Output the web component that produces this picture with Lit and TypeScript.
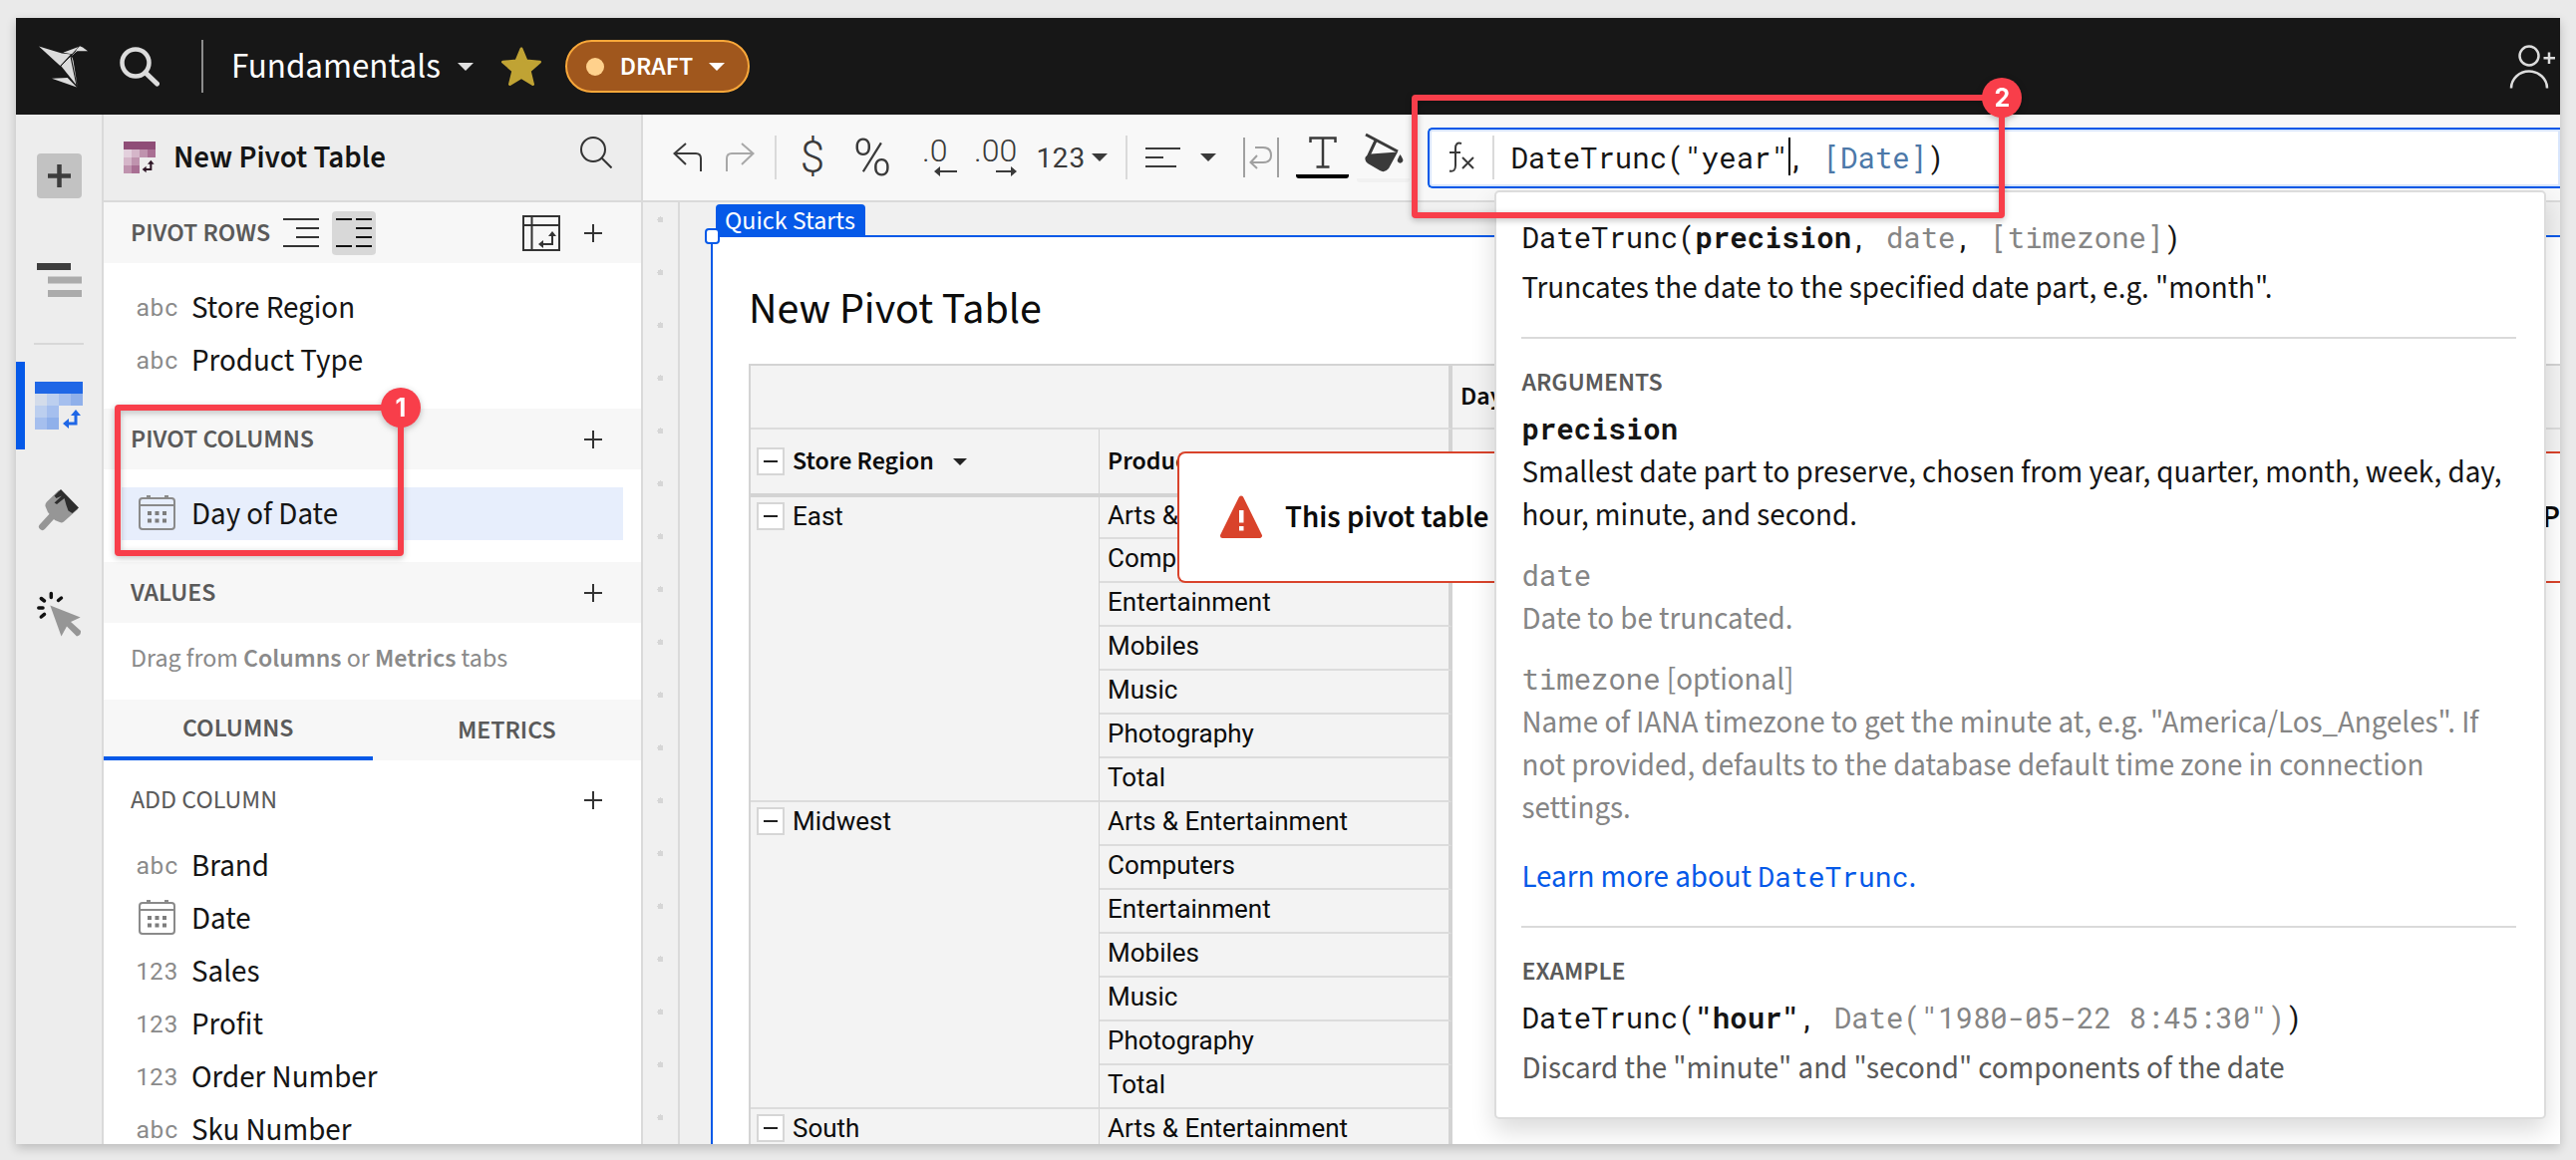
import { LitElement, html, svg, css, nothing } from "lit";
import { customElement, property, state } from "lit/decorators.js";
import { classMap } from "lit/directives/class-map.js";

type FieldType = "text" | "date" | "number";
interface Field {
  name: string;
  type: FieldType;
}

const PIVOT_ROWS: Field[] = [
  { name: "Store Region", type: "text" },
  { name: "Product Type", type: "text" },
];

const PIVOT_COLUMNS: Field[] = [{ name: "Day of Date", type: "date" }];

const SOURCE_COLUMNS: Field[] = [
  { name: "Brand", type: "text" },
  { name: "Date", type: "date" },
  { name: "Sales", type: "number" },
  { name: "Profit", type: "number" },
  { name: "Order Number", type: "number" },
  { name: "Sku Number", type: "text" },
];

const REGIONS = ["East", "Midwest", "South"];
const PRODUCT_TYPES = [
  "Arts & Entertainment",
  "Computers",
  "Entertainment",
  "Mobiles",
  "Music",
  "Photography",
  "Total",
];

const sans = css`"Source Sans Pro", "Source Sans 3", "Noto Sans CJK JP", sans-serif`;
const mono = css`"Roboto Mono", "DejaVu Sans Mono", monospace`;

const caret = html`<svg class="caret" width="16" height="8" viewBox="0 0 16 8" aria-hidden="true"><path d="M0 0H16L8 8Z" fill="currentColor" /></svg>`;

const plusThin = html`<svg width="18" height="18" viewBox="0 0 18 18" aria-hidden="true"><path d="M9 0V18M0 9H18" stroke="#333" stroke-width="2" /></svg>`;

const calendar = html`<svg width="38" height="36" viewBox="0 0 38 36" fill="none" aria-hidden="true">
  <rect x="1" y="3" width="35" height="31" rx="3" stroke="#8a8a8a" stroke-width="2" />
  <path d="M1 10H36" stroke="#8a8a8a" stroke-width="2" />
  <path d="M8 0h4v3h-4zM26 0h4v3h-4z" fill="#8a8a8a" />
  <path d="M9 16h4v4h-4zM16.500 16h4v4h-4zM24 16h4v4h-4zM9 23.500h4v4h-4zM16.500 23.500h4v4h-4zM24 23.500h4v4h-4z" fill="#7d7d7d" />
</svg>`;

const pivotIcon = (size: number, tones: string[], arrow: string) => html`<svg
  width=${size} height=${size} viewBox="0 0 48 48" aria-hidden="true">
  <path d="M0 0H48V12H0Z" fill=${tones[0]} />
  <path d="M0 12H12V24H0Z" fill=${tones[1]} />
  <path d="M12 12H24V24H12ZM0 24H12V36H0Z" fill=${tones[2]} />
  <path d="M24 12H36V24H24ZM12 24H24V36H12ZM0 36H12V48H0Z" fill=${tones[3]} />
  <path d="M36 12H48V24H36ZM12 36H24V48H12Z" fill=${tones[4]} />
  <path d="M41 33V42H33" fill="none" stroke=${arrow} stroke-width="3" />
  <path d="M36 34L41 28L46 34ZM34 37L28 42L34 47Z" fill=${arrow} />
</svg>`;

@customElement("field-row")
class FieldRow extends LitElement {
  @property() name = "";
  @property() type: FieldType = "text";
  @property({ type: Boolean, reflect: true }) selected = false;

  static styles = css`
    :host {
      display: block;
      padding: 0 18px;
    }
    .row {
      display: flex;
      align-items: center;
      gap: 13px;
      width: 100%;
      height: 53px;
      padding: 0 14px;
      border: 0;
      background: none;
      text-align: left;
      font: 31px/40px ${sans};
      color: #151515;
    }
    :host([selected]) .row {
      background: #e7eefc;
    }
    .kind {
      display: flex;
      justify-content: center;
      flex: none;
      width: 43px;
      padding-bottom: 2px;
      font: 24px/32px ${mono};
      color: #8a8a8a;
    }
  `;

  render() {
    const mark = this.type === "date" ? calendar : this.type === "number" ? "123" : "abc";
    return html`<button class="row"><span class="kind">${mark}</span><span>${this.name}</span></button>`;
  }
}

@customElement("function-help")
class FunctionHelp extends LitElement {
  static styles = css`
    :host {
      display: block;
      box-sizing: border-box;
      padding: 25px 28px 27px 25px;
      border: 2px solid #dcdcdc;
      border-radius: 5px;
      background: #fff;
      box-shadow: 0 12px 24px rgba(0, 0, 0, 0.14);
      font: 31px/43px ${sans};
      color: #151515;
    }
    p,
    h3 {
      margin: 0;
    }
    .code {
      margin-bottom: 3px;
      font: 29px/40px ${mono};
    }
    span.code {
      font-size: 28px;
      line-height: 1;
    }
    .prose {
      font-family: ${sans};
      font-size: 31px;
      line-height: 1;
    }
    .soft {
      color: #858585;
    }
    .mid {
      color: #5a5a5a;
    }
    .lead {
      margin-top: 10px;
    }
    .block {
      margin-top: 18px;
    }
    hr {
      height: 2px;
      margin: 27px 0 28px;
      border: 0;
      background: #dadada;
    }
    h3 {
      margin-bottom: 10px;
      font: 600 26px/32px ${sans};
      color: #5a5a5a;
    }
    a {
      display: block;
      margin-top: 26px;
      color: #0559e8;
      text-decoration: none;
    }
  `;

  render() {
    return html`
      <p class="code">DateTrunc(<b>precision</b>, <span class="soft">date</span>, <span class="soft">[timezone]</span>)</p>
      <p class="lead">Truncates the date to the specified date part, e.g. "month".</p>
      <hr />
      <h3>ARGUMENTS</h3>
      <p class="code"><b>precision</b></p>
      <p>Smallest date part to preserve, chosen from year, quarter, month, week, day, hour, minute, and second.</p>
      <div class="soft block">
        <p class="code">date</p>
        <p>Date to be truncated.</p>
      </div>
      <div class="soft block">
        <p class="code">timezone<span class="prose"> [optional]</span></p>
        <p>Name of IANA timezone to get the minute at, e.g. "America/Los_Angeles". If not provided, defaults to the database default time zone in connection settings.</p>
      </div>
      <a href="#datetrunc">Learn more about <span class="code">DateTrunc</span>.</a>
      <hr />
      <h3>EXAMPLE</h3>
      <p class="code">DateTrunc(<b>"hour"</b>, <span class="soft">Date("1980-05-22 8:45:30")</span>)</p>
      <p class="mid lead">Discard the "minute" and "second" components of the date</p>
    `;
  }
}

@customElement("pivot-table")
class PivotTable extends LitElement {
  static styles = css`
    :host {
      display: block;
    }
    table {
      width: 100%;
      table-layout: fixed;
      border-collapse: separate;
      border-spacing: 0;
      border-left: 2px solid #d3d3d3;
      font: 26px/32px Roboto, sans-serif;
      color: #0c0c0c;
    }
    .c-region {
      width: 350px;
    }
    .c-type {
      width: 354px;
    }
    th,
    td {
      box-sizing: border-box;
      height: 44px;
      padding: 0 8px 4px;
      text-align: left;
      font-weight: 400;
    }
    thead th {
      padding: 0 8px;
      background: #f3f3f3;
      font: 600 26px/32px ${sans};
    }
    .top th {
      height: 66px;
      border-top: 2px solid #d3d3d3;
      border-bottom: 2px solid #dcdcdc;
    }
    .names th {
      height: 68px;
      border-bottom: 4px solid #d3d3d3;
    }
    .names .region,
    .region {
      padding-left: 6px;
      border-right: 1px solid #d3d3d3;
    }
    tbody .region {
      padding: 3px 6px 0;
      border-bottom: 2px solid #dcdcdc;
      background: #f3f3f3;
      vertical-align: top;
    }
    thead .type,
    .type {
      border-right: 4px solid #d3d3d3;
    }
    tbody .type {
      border-bottom: 2px solid #dcdcdc;
      background: #f3f3f3;
    }
    tbody:first-of-type tr:first-child td {
      height: 42px;
    }
    .label {
      display: flex;
      align-items: center;
      gap: 8px;
    }
    .fold {
      display: grid;
      place-items: center;
      box-sizing: border-box;
      flex: none;
      width: 28px;
      height: 28px;
      padding: 0;
      border: 2px solid #d6d6d6;
      background: #fff;
    }
    .sort {
      display: flex;
      margin-left: 11px;
      padding: 0;
      border: 0;
      background: none;
      color: #222;
    }
    .sort .caret {
      width: 14px;
      height: 7px;
    }
  `;

  private fold(label: string) {
    return html`<button class="fold" aria-label=${`Collapse ${label}`}>
      <svg width="14" height="2" viewBox="0 0 14 2"><path d="M0 1H14" stroke="#222" stroke-width="2" /></svg>
    </button>`;
  }

  render() {
    return html`<table>
      <colgroup><col class="c-region" /><col class="c-type" /><col /></colgroup>
      <thead>
        <tr class="top"><th class="type" colspan="2"></th><th>Day of Date</th></tr>
        <tr class="names">
          <th class="region"><div class="label">${this.fold("all regions")}<span>Store Region</span><button class="sort" aria-label="Sort">${caret}</button></div></th>
          <th class="type">Product Type</th>
          <th></th>
        </tr>
      </thead>
      ${REGIONS.map(
        (region) => html`<tbody>
          ${PRODUCT_TYPES.map(
            (type, i) => html`<tr>
              ${i === 0
                ? html`<th class="region" rowspan=${PRODUCT_TYPES.length}><div class="label">${this.fold(region)}<span>${region}</span></div></th>`
                : nothing}
              <td class="type">${type}</td><td></td>
            </tr>`,
          )}
        </tbody>`,
      )}
    </table>`;
  }
}

@customElement("app-root")
class AppRoot extends LitElement {
  @state() private tab: "columns" | "metrics" = "columns";

  static styles = css`
    :host {
      display: block;
      box-sizing: border-box;
      height: 100vh;
      padding: 18px 16px 16px;
      background: #eaeaea;
      font: 31px/40px ${sans};
      color: #151515;
    }
    button {
      padding: 0;
      border: 0;
      background: none;
      font: inherit;
      color: inherit;
    }
    .frame {
      display: flex;
      flex-direction: column;
      height: 100%;
      overflow: hidden;
      background: #fff;
    }
    .shadow {
      height: 100%;
      box-shadow: 0 4px 10px rgba(0, 0, 0, 0.2);
    }

    /* top bar */
    .topbar {
      display: flex;
      align-items: center;
      flex: none;
      box-sizing: border-box;
      height: 97px;
      padding: 0 4px 0 23px;
      background: #171717;
      color: #fff;
    }
    .topbar button {
      display: flex;
      align-items: center;
    }
    .find {
      margin-left: 31px;
    }
    .rule {
      width: 2px;
      height: 53px;
      margin: 0 28px 0 42px;
      background: #8c8c8c;
    }
    .doc {
      gap: 17px;
      font-size: 35px;
      line-height: 48px;
    }
    .doc .caret {
      color: #e0e0e0;
    }
    .star {
      margin: 0 24px 0 28px;
    }
    .topbar .draft {
      box-sizing: border-box;
      gap: 16px;
      height: 53px;
      padding: 0 23px 0 19px;
      border: 2px solid #f9a83a;
      border-radius: 27px;
      background: #a0571d;
      font-weight: 600;
      font-size: 26px;
      line-height: 32px;
    }
    .dot {
      width: 18px;
      height: 18px;
      border-radius: 50%;
      background: #ffd18c;
    }
    .share {
      margin-left: auto;
    }

    /* body */
    .body {
      display: flex;
      flex: 1;
      min-height: 0;
    }
    .rail {
      display: flex;
      flex-direction: column;
      align-items: center;
      flex: none;
      width: 86px;
      border-right: 2px solid #dadada;
      background: #ededed;
    }
    .rail button {
      display: grid;
      place-items: center;
      width: 86px;
      height: 88px;
    }
    .rail .add {
      width: 45px;
      height: 45px;
      margin: 39px 0 38px;
      border-radius: 4px;
      background: #c2c2c2;
    }
    .rail .line {
      width: 50px;
      height: 2px;
      margin: 19px 0 17px;
      background: #d8d8d8;
    }
    .rail .current {
      box-sizing: border-box;
      padding-right: 9px;
      border-left: 9px solid #0559e8;
    }
    .rail .spaced {
      margin-top: 17px;
    }

    /* side panel */
    .panel {
      flex: none;
      width: 539px;
      border-right: 2px solid #dadada;
      background: #fff;
    }
    .panel-head {
      display: flex;
      align-items: center;
      box-sizing: border-box;
      height: 88px;
      padding: 0 29px 0 20px;
      border-bottom: 2px solid #dadada;
      background: #ededed;
    }
    .panel-head h1 {
      flex: 1;
      margin: 0 0 0 18px;
      font-size: 31px;
      font-weight: 600;
      line-height: 40px;
    }
    .section {
      position: relative;
    }
    .section-head {
      display: flex;
      align-items: center;
      box-sizing: border-box;
      height: 61px;
      padding: 0 39px 0 27px;
      background: #f7f7f7;
      font-size: 26px;
      line-height: 32px;
      color: #5a5a5a;
    }
    .section-head h2 {
      margin: 0;
      font: inherit;
      font-weight: 600;
    }
    .section-head.plain {
      height: 79px;
      background: #fff;
    }
    .section-head.plain h2 {
      font-weight: 400;
    }
    .plain + .fields {
      padding-top: 0;
    }
    .section-head button {
      display: flex;
    }
    .section-head .last {
      margin-left: auto;
    }
    .layout {
      margin-left: 13px;
    }
    .section-head .layout.on {
      align-items: center;
      justify-content: center;
      width: 44px;
      height: 44px;
      border-radius: 4px;
      background: #d8d8d8;
    }
    .swap {
      margin-left: auto;
      margin-right: 24px;
    }
    .fields {
      padding: 18px 0 22px;
    }
    .hint {
      margin: 0;
      padding: 16px 27px 21px;
      font-size: 26px;
      line-height: 40px;
      color: #8a8a8a;
    }
    .hint b {
      font-weight: 600;
    }
    .tabs {
      display: flex;
      height: 61px;
      background: #f7f7f7;
    }
    .tabs button {
      flex: 1;
      box-sizing: border-box;
      font-size: 26px;
      font-weight: 600;
      line-height: 32px;
      color: #5a5a5a;
    }
    .tabs .active {
      border-bottom: 4px solid #0559e8;
    }

    /* main */
    .main {
      display: flex;
      flex-direction: column;
      flex: 1;
      min-width: 0;
    }
    .toolbar {
      display: flex;
      align-items: center;
      flex: none;
      box-sizing: border-box;
      height: 88px;
      padding-left: 18px;
      border-bottom: 2px solid #dadada;
      background: #f8f8f8;
      color: #3a3a3a;
    }
    .toolbar button {
      display: flex;
      align-items: center;
      justify-content: center;
      flex: none;
      height: 53px;
    }
    .history {
      width: 53px;
    }
    .sep {
      flex: none;
      width: 2px;
      height: 44px;
      margin: 0 6px 0 8px;
      background: #dadada;
    }
    .fmt {
      width: 60px;
      font-family: Roboto, sans-serif;
      font-weight: 300;
      font-size: 44px;
      line-height: 53px;
    }
    .fmt.pct {
      font-size: 52px;
    }
    .digits {
      font-family: Roboto, sans-serif;
      font-weight: 300;
      font-size: 32px;
    }
    .toolbar .decimals {
      justify-content: flex-end;
      width: 58px;
    }
    .toolbar .number {
      gap: 6px;
      margin-left: 18px;
      font: 28px/40px ${mono};
    }
    .sep.wide {
      margin: 0 18px;
    }
    .align {
      gap: 20px;
    }
    .wrap {
      margin: 0 17px 0 27px;
    }
    .toolbar .ink {
      flex-direction: column;
      gap: 6px;
      width: 53px;
      margin-right: 8px;
    }
    .ink i {
      width: 100%;
      height: 4px;
      border-radius: 0 0 3px 3px;
      background: #000;
    }
    .ink i.none {
      background: #f1f1f1;
    }
    .formula {
      position: relative;
      display: flex;
      align-items: center;
      flex: 1;
      box-sizing: border-box;
      min-width: 0;
      height: 61px;
      margin-left: 10px;
      border: 2px solid #0559e8;
      border-right: 0;
      border-radius: 5px 0 0 5px;
      background: #fff;
      box-shadow: inset 0 0 0 2px #d9e6fc;
    }
    .fx {
      flex: none;
      margin: 0 17px 0 19px;
    }
    .formula .sep {
      margin: 0;
    }
    .editor {
      position: relative;
      flex: 1;
      margin-left: 16px;
      font: 29px/38px ${mono};
      color: #151515;
    }
    .tokens {
      white-space: pre;
    }
    .ref {
      color: #4c78a8;
    }
    .cursor {
      position: relative;
    }
    .cursor::after {
      content: "";
      position: absolute;
      top: -1px;
      left: 0;
      width: 2px;
      height: 38px;
      background: #000;
    }
    .editor input {
      position: absolute;
      inset: 0;
      box-sizing: border-box;
      width: 100%;
      padding: 0;
      border: 0;
      outline: 0;
      background: none;
      font: inherit;
      color: transparent;
    }
    function-help {
      position: absolute;
      z-index: 4;
      top: 61px;
      left: 65px;
      right: 14px;
    }

    /* numbered marks */
    .mark {
      position: absolute;
      z-index: 6;
      box-sizing: border-box;
      border: 6px solid #f83e4a;
      border-radius: 4px;
      filter: drop-shadow(0 2px 3px rgba(0, 0, 0, 0.25));
      pointer-events: none;
    }
    .mark span {
      position: absolute;
      top: -23px;
      right: -23px;
      width: 40px;
      height: 40px;
      border-radius: 50%;
      background: #f83e4a;
      color: #fff;
      text-align: center;
      font: 700 25px/40px Inter, sans-serif;
    }
    .mark.one {
      top: -4px;
      left: 11px;
      width: 290px;
      height: 152px;
    }
    .mark.two {
      top: -35px;
      left: -18px;
      width: 595px;
      height: 124px;
    }

    /* canvas */
    .canvas {
      display: flex;
      flex: 1;
      min-height: 0;
      background: #f0f0f0;
    }
    .gutter {
      flex: none;
      width: 35px;
      border-right: 2px solid #dadada;
      background-image: radial-gradient(circle, #d6d6d6 3px, transparent 3px);
      background-size: 35px 53px;
      background-position: 0 -9px;
    }
    .page {
      position: relative;
      flex: 1;
      box-sizing: border-box;
      min-width: 0;
      margin: 33px 0 0 31px;
      padding: 49px 0 0 36px;
      border-top: 2px solid #0559e8;
      border-left: 2px solid #0559e8;
      background: #fff;
    }
    .tag {
      position: absolute;
      left: 3px;
      bottom: 100%;
      box-sizing: border-box;
      height: 33px;
      padding: 0 10px 0 9px;
      border-radius: 4px 4px 0 0;
      background: #0559e8;
      color: #fff;
      font-size: 26px;
      line-height: 34px;
    }
    .handle {
      position: absolute;
      top: -9px;
      left: -8px;
      box-sizing: border-box;
      width: 15px;
      height: 16px;
      border: 2px solid #0559e8;
      border-radius: 4px;
      background: #fff;
    }
    .page h2 {
      margin: 0 0 30px;
      font-size: 44px;
      font-weight: 400;
      line-height: 48px;
      color: #0c0c0c;
    }
    .error {
      position: absolute;
      top: 215px;
      left: 466px;
      right: 0;
      display: flex;
      align-items: center;
      gap: 22px;
      box-sizing: border-box;
      height: 132px;
      padding-left: 40px;
      border: 2px solid #d9432b;
      border-right: 0;
      border-radius: 8px 0 0 8px;
      background: #fff;
      font-weight: 600;
      color: #0c0c0c;
    }
    .error .more {
      margin-left: auto;
    }
  `;

  private renderTopbar() {
    return html`<header class="topbar">
      <svg width="50" height="42" viewBox="0 0 50 42" fill="#dcdcdc" aria-hidden="true">
        <path d="M0 .5L23 7.500L32 8.500L21.300 20Z" />
        <path d="M24.300 6.700L39.700 .9L33 8.200Z" />
        <path d="M41 .3L44 1.500L49 5.300L38.500 5.200Q35.500 7 33 10L34 7.500Z" />
        <path d="M31.400 10.800L22.300 20.300L37.300 39Z" />
        <path d="M32.600 10.400Q34 12 34.500 15L38.900 42Z" />
        <path d="M13 32.800L28.700 32L38 41.500Z" />
        <path d="M32.500 9.500L37.500 4.500M21.500 20.500L33 9" stroke="#171717" stroke-width=".9" />
      </svg>
      <button class="find" aria-label="Search">
        <svg width="40" height="40" viewBox="0 0 40 40" fill="none" stroke="#dcdcdc">
          <circle cx="16" cy="16" r="13.500" stroke-width="4.500" />
          <path d="M26 26L37.500 37" stroke-width="5" stroke-linecap="round" />
        </svg>
      </button>
      <span class="rule"></span>
      <button class="doc"><span>Fundamentals</span>${caret}</button>
      <svg class="star" width="40" height="40" viewBox="0 0 40 40" aria-label="Favorite">
        <path d="M20 2L25 14L38.500 15.200L28.200 24L31.500 37.500L20 30.500L8.500 37.500L11.800 24L1.500 15.200L15 14Z" fill="#c0a334" stroke="#c0a334" stroke-width="3" stroke-linejoin="round" />
      </svg>
      <button class="draft"><span class="dot"></span><span>DRAFT</span>${caret}</button>
      <button class="share" aria-label="Share">
        <svg width="48" height="44" viewBox="0 0 48 44" fill="none" stroke="#dcdcdc" stroke-width="2.500">
          <circle cx="21" cy="11" r="9.500" />
          <path d="M3 43.500A18 17 0 0 1 39 43.500" />
          <path d="M41 7.500V19M35.500 13.200H47" />
        </svg>
      </button>
    </header>`;
  }

  private renderRail() {
    return html`<nav class="rail" aria-label="Editor">
      <button class="add" aria-label="Add element">
        <svg width="23" height="23" viewBox="0 0 23 23"><path d="M11.500 0V23M0 11.500H23" stroke="#3d3d3d" stroke-width="4.500" /></svg>
      </button>
      <button aria-label="Outline">
        <svg width="46" height="36" viewBox="0 0 46 36">
          <path d="M1 1h34v7h-34z" fill="#3d3d3d" />
          <path d="M12 14.500h34v7h-34zM12 28h34v7h-34z" fill="#ababab" />
        </svg>
      </button>
      <span class="line"></span>
      <button class="current" aria-label="Element properties">
        ${pivotIcon(48, ["#1f67e6", "#d3dcea", "#bccfef", "#a5bfee", "#8fb0ea"], "#1f67e6")}
      </button>
      <button class="spaced" aria-label="Element format">
        <svg width="42" height="42" viewBox="0 0 42 42">
          <path d="M15 26L4.500 37.500" stroke="#969696" stroke-width="7" stroke-linecap="round" />
          <path d="M21 1L40 20L26 32.500Q24 34 22 33L17 31L10 23L7.500 17Q7 14.500 9 12.500Z" fill="#969696" />
          <path d="M23 0L41 18.500L34.500 24L30.500 21.500L28.500 16L26.500 9L19 15L16.500 13.500L24 6.500L18.500 9L16.500 6.500Z" fill="#2e2e2e" />
        </svg>
      </button>
      <button class="spaced" aria-label="Actions">
        <svg width="45" height="48" viewBox="0 0 45 48">
          <path d="M13.300 14.500L43.700 26.500L34 31L44 40Q44.500 44.500 40 45.500L30 35.500L24.500 45.500Z" fill="#969696" />
          <path d="M14.300 2.500V6.500M4.300 7.500L7.500 10M1.800 17H6M4.300 26L7.500 23.300M21.500 9.500L24.500 7" stroke="#111" stroke-width="3.500" stroke-linecap="round" />
        </svg>
      </button>
    </nav>`;
  }

  private renderFields(fields: Field[], selected = false) {
    return html`<div class="fields">
      ${fields.map((f) => html`<field-row .name=${f.name} .type=${f.type} ?selected=${selected}></field-row>`)}
    </div>`;
  }

  private renderPanel() {
    return html`<aside class="panel">
      <div class="panel-head">
        ${pivotIcon(32, ["#8f4d77", "#e3d0dd", "#d5b6c9", "#bf93ae", "#a96f93"], "#2d1424")}
        <h1>New Pivot Table</h1>
        <button aria-label="Search panel">
          <svg width="32" height="32" viewBox="0 0 32 32" fill="none" stroke="#333" stroke-width="2">
            <circle cx="13" cy="13" r="12" /><path d="M21.500 21.500L31.500 31.500" />
          </svg>
        </button>
      </div>
      <section class="section">
        <div class="section-head">
          <h2>PIVOT ROWS</h2>
          <button class="layout" aria-label="Stacked rows">
            <svg width="36" height="29" viewBox="0 0 36 29"><path d="M0 1H36M13 10H36M13 19H36M0 28H36" stroke="#333" stroke-width="2" /></svg>
          </button>
          <button class="layout on" aria-label="Separate rows">
            <svg width="36" height="29" viewBox="0 0 36 29"><path d="M0 1H16M20 1H36M20 10H36M20 19H36M0 28H16M20 28H36" stroke="#111" stroke-width="2" /></svg>
          </button>
          <button class="swap" aria-label="Swap rows and columns">
            <svg width="38" height="36" viewBox="0 0 38 36" fill="none" stroke="#333" stroke-width="2">
              <path d="M1 1H37V35H1ZM9.500 1V35M1 10H37M30 20V29H19" />
              <path d="M26 21L30 16L34 21ZM21 25L16 29L21 33Z" fill="#333" stroke="none" />
            </svg>
          </button>
          <button aria-label="Add pivot row">${plusThin}</button>
        </div>
        ${this.renderFields(PIVOT_ROWS)}
      </section>
      <section class="section">
        <div class="section-head"><h2>PIVOT COLUMNS</h2><button class="last" aria-label="Add pivot column">${plusThin}</button></div>
        ${this.renderFields(PIVOT_COLUMNS, true)}
        <div class="mark one"><span>1</span></div>
      </section>
      <section class="section">
        <div class="section-head"><h2>VALUES</h2><button class="last" aria-label="Add value">${plusThin}</button></div>
        <p class="hint">Drag from <b>Columns</b> or <b>Metrics</b> tabs</p>
      </section>
      <div class="tabs" role="tablist">
        <button role="tab" class=${classMap({ active: this.tab === "columns" })} @click=${() => (this.tab = "columns")}>COLUMNS</button>
        <button role="tab" class=${classMap({ active: this.tab === "metrics" })} @click=${() => (this.tab = "metrics")}>METRICS</button>
      </div>
      <section class="section">
        <div class="section-head plain"><h2>ADD COLUMN</h2><button class="last" aria-label="Add column">${plusThin}</button></div>
        ${this.renderFields(SOURCE_COLUMNS)}
      </section>
    </aside>`;
  }

  private renderToolbar() {
    const back = svg`<path d="M1 11H23Q28 11 28 16V29M13 1L1.500 11L13 22" fill="none" stroke="currentColor" stroke-width="2" />`;
    return html`<div class="toolbar" role="toolbar" aria-label="Formatting">
      <button class="history" aria-label="Undo"><svg width="29" height="30" viewBox="0 0 29 30">${back}</svg></button>
      <button class="history" aria-label="Redo"><svg width="29" height="30" viewBox="0 0 29 30" color="#a8a8a8"><g transform="matrix(-1 0 0 1 29 0)">${back}</g></svg></button>
      <span class="sep"></span>
      <button class="fmt" aria-label="Currency">$</button>
      <button class="fmt pct" aria-label="Percent">%</button>
      <button class="decimals" aria-label="Fewer decimals">
        <svg width="36" height="40" viewBox="0 0 36 40" fill="currentColor"><text class="digits" x="-2" y="24">.0</text><path d="M10 34L16 29V33H33V35H16V39Z" /></svg>
      </button>
      <button class="decimals" aria-label="More decimals">
        <svg width="42" height="40" viewBox="0 0 42 40" fill="currentColor"><text class="digits" x="-2" y="24">.00</text><path d="M41 34L35 29V33H20V35H35V39Z" /></svg>
      </button>
      <button class="number"><span>123</span>${caret}</button>
      <span class="sep wide"></span>
      <button class="align" aria-label="Align text">
        <svg width="35" height="20" viewBox="0 0 35 20"><path d="M0 1H35M0 10H18M0 19H31" stroke="currentColor" stroke-width="2" /></svg>
        ${caret}
      </button>
      <button class="wrap" aria-label="Wrap text">
        <svg width="36" height="40" viewBox="0 0 36 40" fill="none" stroke="#a0a0a0" stroke-width="2">
          <path d="M1 0V40M35 0V40M12 10H20Q28 10 28 18Q28 25 20 25H8M14 18L7.500 25L14 31" />
        </svg>
      </button>
      <button class="ink" aria-label="Text color">
        <svg width="28" height="32" viewBox="0 0 28 32" fill="none" stroke="currentColor" stroke-width="2.500"><path d="M1.500 6V1.500H26.500V6M14 1.500V30.500M7.500 30.500H20.500" /></svg>
        <i></i>
      </button>
      <button class="ink" aria-label="Fill color">
        <svg width="40" height="40" viewBox="0 0 40 40">
          <path d="M2 2L34 19M12 8L4 25" fill="none" stroke="currentColor" stroke-width="3" />
          <path d="M2 24L7 21.500L34 19.500L25 36Q21 41 16 38L4 31Q0 28 2 24Z" fill="currentColor" />
          <path d="M36.500 22Q40 27 39.300 28.500A2.900 2.900 0 0 1 33.700 28.500Q33.500 27 36.500 22Z" fill="currentColor" />
        </svg>
        <i class="none"></i>
      </button>
      <div class="formula">
        <svg class="fx" width="27" height="32" viewBox="0 0 27 32" fill="none" stroke="#3a3a3a" stroke-width="2" aria-hidden="true">
          <path d="M13 2Q7 0 7 7V24Q7 31 1 29.500M1 11H12M14 16L25 27M25 16L14 27" />
        </svg>
        <span class="sep"></span>
        <div class="editor">
          <div class="tokens" aria-hidden="true">DateTrunc("year"<span class="cursor"></span>, <span class="ref">[Date]</span>)</div>
          <input aria-label="Formula" spellcheck="false" .value=${'DateTrunc("year", [Date])'} />
        </div>
        <function-help></function-help>
        <div class="mark two"><span>2</span></div>
      </div>
    </div>`;
  }

  private renderCanvas() {
    return html`<div class="canvas">
      <div class="gutter"></div>
      <article class="page">
        <div class="tag">Quick Starts</div>
        <span class="handle"></span>
        <h2>New Pivot Table</h2>
        <pivot-table></pivot-table>
        <div class="error" role="alert">
          <svg width="44" height="44" viewBox="0 0 44 44" aria-hidden="true">
            <path d="M22 3L40.500 40.500H3.500Z" fill="#d9432b" stroke="#d9432b" stroke-width="5" stroke-linejoin="round" />
            <path d="M20 15h4.500v12.500h-4.500zM20 31h4.500v4.500h-4.500z" fill="#fff" />
          </svg>
          <span>This pivot table</span>
          <span class="more">P</span>
        </div>
      </article>
    </div>`;
  }

  render() {
    return html`<div class="shadow"><div class="frame">
      ${this.renderTopbar()}
      <div class="body">
        ${this.renderRail()} ${this.renderPanel()}
        <main class="main">${this.renderToolbar()} ${this.renderCanvas()}</main>
      </div>
    </div></div>`;
  }
}
